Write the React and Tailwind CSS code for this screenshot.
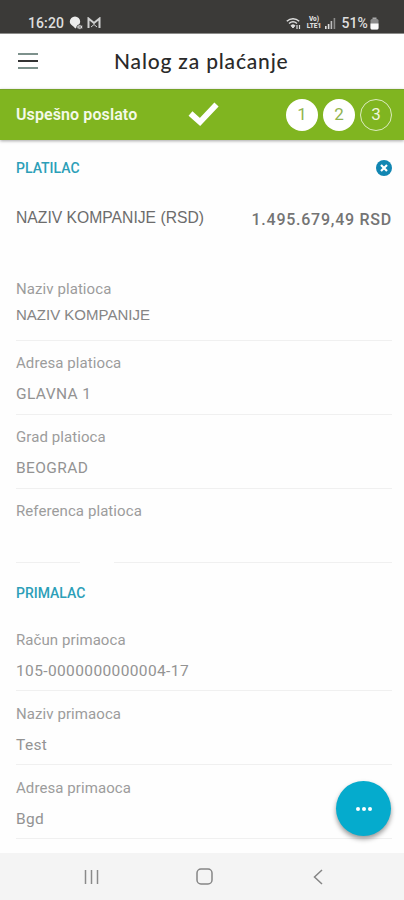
import React from 'react';

const payerFields = [
  { label: 'Naziv platioca', value: 'NAZIV KOMPANIJE', font: 'arial' },
  { label: 'Adresa platioca', value: 'GLAVNA 1' },
  { label: 'Grad platioca', value: 'BEOGRAD' },
  { label: 'Referenca platioca', value: '', split: true },
];

const recipientFields = [
  { label: 'Račun primaoca', value: '105-0000000000004-17' },
  { label: 'Naziv primaoca', value: 'Test' },
  { label: 'Adresa primaoca', value: 'Bgd' },
];

const StatusBar = () => (
  <div className="flex h-[33px] items-end justify-between bg-[#3b3a38] pr-[25px] pb-px pl-7 text-[#dedede]">
    <div className="flex items-center">
      <span className="text-[14px] leading-[18px] font-medium tracking-[0.1px]">16:20</span>
      <svg className="ml-[5px]" width="14" height="14" viewBox="0 0 14 14" fill="none">
        <path d="M6 0.500a5.200 5.200 0 0 1 5.200 5.200c0 2.500-2.500 4-4.700 6.800C4.500 10 0.800 8.500 0.800 5.700A5.200 5.200 0 0 1 6 0.500z" fill="#ececec" />
        <ellipse cx="10.800" cy="11" rx="3" ry="2.200" fill="#dcdcdc" stroke="#3b3a38" strokeWidth="0.8" />
        <path d="M9.500 11h2.500" stroke="#3b3a38" strokeWidth="0.8" />
      </svg>
      <svg className="ml-1" width="14" height="12" viewBox="0 0 14 12" fill="none" stroke="#d0d0d0">
        <path d="M1.500 11V1.500L7 6l5.500-4.500V11" strokeWidth="2" />
        <path d="M4 10L7 7.500L10 10" strokeWidth="1" />
      </svg>
    </div>
    <div className="flex items-center">
      <svg width="16" height="13" viewBox="0 0 16 13" fill="none" stroke="#dedede">
        <path d="M0.800 4.200C4.500 0.800 9.500 0.800 13.200 4.200" strokeWidth="1.5" />
        <path d="M3 6.500c2.500-2.100 5.500-2.100 8 0" strokeWidth="1.5" />
        <path d="M5 8.600c1.300-1 2.700-1 4 0L7 11z" fill="#dedede" />
        <path d="M11 12V8M13.500 8v4" strokeWidth="1.2" />
      </svg>
      <div className="ml-1 flex w-[15px] flex-col items-center text-[6.500px] leading-[7px] font-black">
        <span>Vo)</span>
        <span>LTE1</span>
      </div>
      <svg className="ml-1" width="11" height="12" viewBox="0 0 11 12" fill="#dedede">
        <rect x="0" y="9" width="1.600" height="3" />
        <rect x="2.800" y="7" width="1.600" height="5" />
        <rect x="5.600" y="4" width="1.600" height="8" opacity="0.8" />
        <rect x="8.600" y="1" width="1.600" height="11" opacity="0.5" />
      </svg>
      <span className="ml-[5px] text-[14px] leading-[18px] font-medium tracking-[0.1px]">51%</span>
      <svg className="ml-0.5" width="9" height="13" viewBox="0 0 9 13">
        <rect x="2.500" y="0.500" width="4" height="2" fill="#aaa" />
        <rect x="0.500" y="2" width="8" height="10.500" rx="1.500" fill="#8b8b8b" />
        <path d="M0.500 6.500h8V11a1.500 1.500 0 0 1-1.500 1.500H2A1.500 1.500 0 0 1 0.500 11z" fill="#fafafa" />
      </svg>
    </div>
  </div>
);

const Header = () => (
  <header className="flex h-14 items-center border-t border-[#8c8c8a] bg-white pb-0.5 pl-[18px]">
    <div className="flex w-5 flex-col gap-[5px]">
      <span className="h-0.5 bg-[#7d918c]"></span>
      <span className="h-0.5 bg-[#333]"></span>
      <span className="h-0.5 bg-[#7d918c]"></span>
    </div>
    <h1 className="ml-[76px] font-[Lato,sans-serif] text-[21px] leading-6 font-medium tracking-[0.82px] text-[#2a2a2a]">
      Nalog za plaćanje
    </h1>
  </header>
);

const StepBar = () => (
  <div className="relative flex h-[51px] items-center border-t border-[#76a329] bg-[#80b520] pr-3 pl-4 shadow-[0_1px_3px_rgba(0,0,0,0.35)]">
    <span className="w-[172px] text-[16px] font-semibold tracking-[0.1px] text-[#f4f9e9]">Uspešno poslato</span>
    <svg width="32" height="26" viewBox="0 0 32 26" fill="none">
      <path d="M2.500 11.500l9.500 8.500L28.500 2.500" stroke="#fff" strokeWidth="5.800" />
    </svg>
    <div className="ml-auto flex gap-[5px] text-[17px]">
      <span className="flex size-8 items-center justify-center rounded-full bg-white text-[#91b450]">1</span>
      <span className="flex size-8 items-center justify-center rounded-full bg-white text-[#91b450]">2</span>
      <span className="flex size-8 items-center justify-center rounded-full border border-[#dcecc0] text-[#eef6df]">3</span>
    </div>
  </div>
);

const Field = ({ label, value, font, split, low }) => (
  <div className={`flex h-[74px] flex-col ${low ? 'pt-[13px]' : 'pt-3'}`}>
    <span className="text-[15px] leading-5 tracking-[0.08px] text-[#9c9c9c]">{label}</span>
    {font === 'arial' ? (
      <span className="mt-1.5 font-['Liberation_Sans',sans-serif] text-[15px] leading-5 text-[#858585]">{value}</span>
    ) : (
      <span className="mt-[11px] text-[15.500px] leading-5 tracking-[0.38px] text-[#939393]">{value}</span>
    )}
    <div className="mt-auto flex h-px justify-between">
      {split ? (
        <>
          <span className="w-16 bg-[#f0f0f0]"></span>
          <span className="w-[278px] bg-[#f0f0f0]"></span>
        </>
      ) : (
        <span className="w-full bg-[#f0f0f0]"></span>
      )}
    </div>
  </div>
);

const NavBar = () => (
  <nav className="flex h-[47px] items-center bg-[#f4f4f4]">
    <svg className="ml-[83px]" width="17" height="16" viewBox="0 0 17 16" stroke="#8a8a8a" strokeWidth="1.5">
      <path d="M2.500 1v14M8.500 1v14M14.500 1v14" />
    </svg>
    <svg className="ml-[96px]" width="17" height="17" viewBox="0 0 17 17" fill="none" stroke="#858585" strokeWidth="1.5">
      <rect x="1" y="1" width="15" height="15" rx="4" />
    </svg>
    <svg className="ml-[100px]" width="10" height="16" viewBox="0 0 10 16" fill="none" stroke="#858585" strokeWidth="1.5">
      <path d="M9 1L1.500 8L9 15" />
    </svg>
  </nav>
);

const App = () => {
  return (
    <div className="relative flex h-[900px] w-[404px] flex-col overflow-hidden bg-[#fefefe] font-[Roboto,sans-serif]">
      <StatusBar />
      <Header />
      <StepBar />

      <main className="flex-1 pr-3 pl-4">
        {/* Payer */}
        <div className="flex h-14 items-center justify-between">
          <h2 className="text-[14px] font-medium text-[#2c9fb8]">PLATILAC</h2>
          <svg width="16" height="16" viewBox="0 0 16 16">
            <circle cx="8" cy="8" r="8" fill="#1186b2" />
            <path d="M5 5l6 6M11 5l-6 6" stroke="#fff" strokeWidth="2.200" />
          </svg>
        </div>
        <div className="flex h-[71px] justify-between pt-3">
          <span className="font-['Liberation_Sans',sans-serif] text-[15.700px] leading-5 text-[#6c6c6c]">NAZIV KOMPANIJE (RSD)</span>
          <span className="pt-0.5 text-[16px] leading-5 font-medium tracking-[0.75px] text-[#747474]">1.495.679,49 RSD</span>
        </div>
        {payerFields.map((field) => (
          <Field key={field.label} {...field} />
        ))}

        {/* Recipient */}
        <div className="flex h-[54px] items-center pt-1.5">
          <h2 className="text-[14px] font-medium text-[#2c9fb8]">PRIMALAC</h2>
        </div>
        {recipientFields.map((field) => (
          <Field key={field.label} {...field} low />
        ))}
      </main>

      <NavBar />

      {/* Floating menu button */}
      <button className="absolute right-[13px] bottom-16 flex size-[55px] items-center justify-center gap-0.5 rounded-full bg-[#05abcd] shadow-[0_3px_5px_rgba(0,0,0,0.4)]">
        <span className="size-1 rounded-full bg-white"></span>
        <span className="size-1 rounded-full bg-white"></span>
        <span className="size-1 rounded-full bg-white"></span>
      </button>
    </div>
  );
};

export default App;
